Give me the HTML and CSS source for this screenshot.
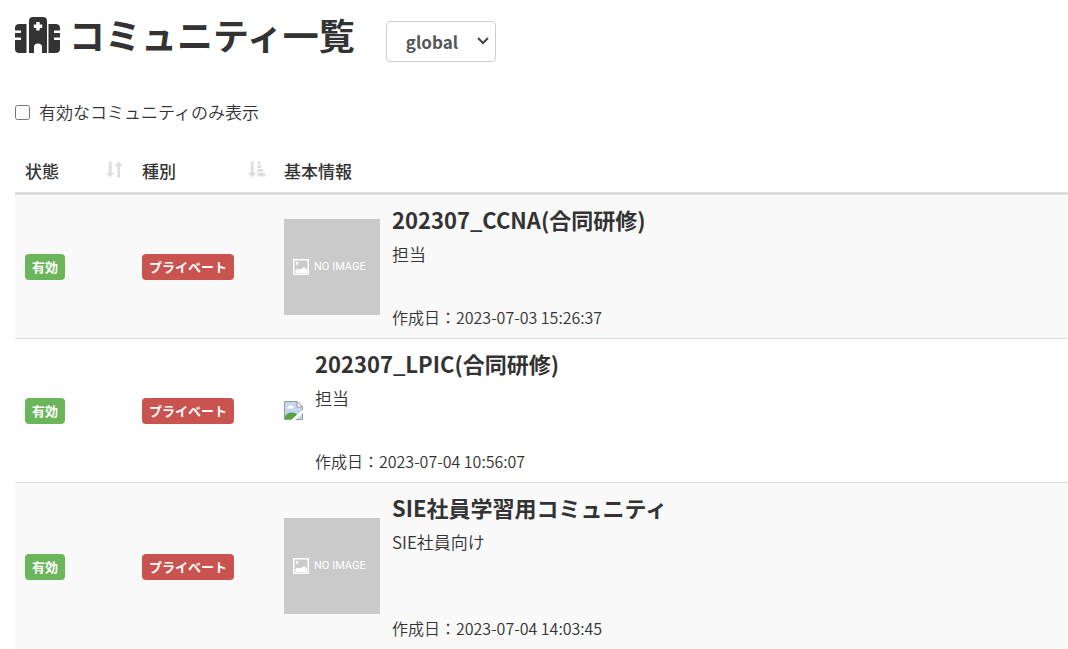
FILE: index.html
```html
<!DOCTYPE html>
<html lang="ja">
    <head>
        <meta charset="UTF-8" />
        <meta name="viewport" content="width=device-width, initial-scale=1.0" />
        <title>コミュニティ一覧</title>
        <link rel="stylesheet" href="styles.css">
    </head>

    <body>
        <!-- shared graphics -->
        <svg class="defs" aria-hidden="true">
            <symbol id="pictureIcon" viewBox="0 0 16 16">
                <path fill="#fff" fill-rule="evenodd" d="M0 0h16v16H0zM1.500 1.500v13h13v-13z" />
                <path fill="#fff" d="M2.500 14v-3l2.500-1.500 2.500 1 3.500-2.500 3 2.500v3.500z" />
                <path fill="#fff" d="M3 3h3L4.500 4.500 5 6.500 3 5.500z" />
            </symbol>
        </svg>

        <header class="page-header">
            <h1 class="page-title">
                <svg class="title-icon" viewBox="0 0 46 38" aria-hidden="true">
                    <path fill="#333" d="M4.500 8H11.500V37H4.500Q0 37 0 33V24H6V21.500H0V17H6V14.500H0V12Q0 8 4.500 8Z" />
                    <path fill="#333" d="M40.500 8H33.500V37H40.500Q45 37 45 33V24H39V21.500H45V17H39V14.500H45V12Q45 8 40.500 8Z" />
                    <path fill="#333" fill-rule="evenodd" d="M18 1H28Q32 1 32 5V37H27V31Q27 27.500 23 27.500T19 31V37H14V5Q14 1 18 1ZM21.300 6V8.500H18.800V12H21.300V14.500H24.700V12H27.200V8.500H24.700V6Z" />
                </svg>
                コミュニティ一覧
            </h1>
            <select class="scope-select" aria-label="表示範囲">
                <option>global</option>
            </select>
        </header>

        <div class="filter">
            <input type="checkbox" id="activeOnly" />
            <label for="activeOnly">有効なコミュニティのみ表示</label>
        </div>

        <table class="community-table">
            <thead>
                <tr>
                    <th class="col-status">
                        <button class="sort" type="button">
                            状態
                            <svg class="sort-icon" viewBox="0 0 18 18" aria-hidden="true">
                                <path fill="#ddd" d="M3 1h3v12h3l-4.500 5L0 13h3zM12 18V6H9l4.500-5L18 6h-3v12z" />
                            </svg>
                        </button>
                    </th>
                    <th class="col-type">
                        <button class="sort" type="button">
                            種別
                            <svg class="sort-icon" viewBox="0 0 18 18" aria-hidden="true">
                                <path fill="#ddd" d="M3 1h3v12h3l-4.500 5L0 13h3zM10 1h3v3h-3zM10 5h4v3h-4zM10 9h6v3h-6zM10 13h8v4h-8z" />
                            </svg>
                        </button>
                    </th>
                    <th>基本情報</th>
                </tr>
            </thead>
            <tbody>
                <tr>
                    <td><span class="label label-success">有効</span></td>
                    <td><span class="label label-danger">プライベート</span></td>
                    <td>
                        <div class="media">
                            <div class="no-image">
                                <svg class="picture-icon" aria-hidden="true"><use href="#pictureIcon" /></svg>
                                NO IMAGE
                            </div>
                            <div class="media-body">
                                <h2 class="name">202307_CCNA(合同研修)</h2>
                                <p class="description">担当</p>
                                <p class="created">作成日：2023-07-03 15:26:37</p>
                            </div>
                        </div>
                    </td>
                </tr>
                <tr>
                    <td><span class="label label-success">有効</span></td>
                    <td><span class="label label-danger">プライベート</span></td>
                    <td>
                        <div class="media">
                            <svg class="broken-image" viewBox="0 0 19 19" aria-hidden="true">
                                <path fill="#c4d5f2" stroke="#999" d="M.5.500H13L18.500 6V18.500H.5z" />
                                <path fill="#fff" d="M3 7.500Q3 5.500 5 5.500 6 3 8 4.500 10 5 9.500 7.500z" />
                                <path fill="#5aa33c" d="M1 18v-2.500Q3 11.500 8 11.500 12 11.500 13 14L9 18z" />
                                <path fill="#fff" stroke="#999" d="M13 .5V6h5.500z" />
                                <path fill="#fff" d="M7 19L19 8.500V12L11.500 19z" />
                            </svg>
                            <div class="media-body">
                                <h2 class="name">202307_LPIC(合同研修)</h2>
                                <p class="description">担当</p>
                                <p class="created">作成日：2023-07-04 10:56:07</p>
                            </div>
                        </div>
                    </td>
                </tr>
                <tr>
                    <td><span class="label label-success">有効</span></td>
                    <td><span class="label label-danger">プライベート</span></td>
                    <td>
                        <div class="media">
                            <div class="no-image">
                                <svg class="picture-icon" aria-hidden="true"><use href="#pictureIcon" /></svg>
                                NO IMAGE
                            </div>
                            <div class="media-body">
                                <h2 class="name">SIE社員学習用コミュニティ</h2>
                                <p class="description description-long">SIE社員向け</p>
                                <p class="created">作成日：2023-07-04 14:03:45</p>
                            </div>
                        </div>
                    </td>
                </tr>
            </tbody>
        </table>
    </body>
</html>
```
FILE: styles.css
```css
* {
    box-sizing: border-box;
}

body {
    margin: 0;
    padding: 11px 0 0 15px;
    font-family: "Noto Sans CJK JP", sans-serif;
    font-size: 17px;
    font-weight: 350;
    line-height: 24px;
    color: #333;
    background-color: #fff;
}

.defs {
    position: absolute;
    width: 0;
    height: 0;
}

.page-header {
    display: flex;
    align-items: center;
    gap: 31px;
    height: 60px;
}

.page-title {
    display: flex;
    align-items: flex-end;
    gap: 8px;
    margin: 0 0 14px;
    font-size: 36px;
    line-height: 40px;
    font-weight: 700;
}

.title-icon {
    width: 46px;
    height: 38px;
}

.scope-select {
    width: 110px;
    height: 41px;
    padding: 6px 0 6px 19px;
    border: 1px solid #ccc;
    border-radius: 4px;
    font-family: inherit;
    font-size: 17px;
    font-weight: 700;
    color: #555;
    appearance: none;
    background: #fff url("data:image/svg+xml,%3Csvg xmlns='http://www.w3.org/2000/svg' width='12' height='8'%3E%3Cpath d='M1 1l5 5 5-5' fill='none' stroke='%23444' stroke-width='2'/%3E%3C/svg%3E") no-repeat right 6px center;
}

.filter {
    display: flex;
    align-items: center;
    gap: 9px;
    margin: 29px 0 24px;
}

.filter input {
    width: 15px;
    height: 15px;
    margin: 0;
}

.community-table {
    width: 100%;
    table-layout: fixed;
    border-collapse: collapse;
}

.community-table th {
    padding: 11px 10px 9px;
    border-bottom: 3px solid #ddd;
    text-align: left;
    font-weight: 500;
}

.community-table td {
    padding: 8px 10px;
    border-bottom: 1px solid #ddd;
    vertical-align: middle;
}

.community-table tbody tr:nth-child(odd) {
    background-color: #f9f9f9;
}

.community-table .col-status,
.community-table .col-type {
    padding-right: 9px;
}

.col-status {
    width: 117px;
}

.col-type {
    width: 142px;
}

.sort {
    display: flex;
    align-items: center;
    justify-content: space-between;
    width: 100%;
    padding: 0;
    border: 0;
    font: inherit;
    color: inherit;
    background: none;
    cursor: pointer;
}

.sort-icon {
    width: 17px;
    height: 18px;
    margin-bottom: 4px;
}

.label {
    display: inline-block;
    padding: 0 7px;
    border-radius: 4px;
    font-size: 13px;
    line-height: 26px;
    font-weight: 700;
    color: #fff;
    vertical-align: middle;
}

.label-success {
    background-color: #6bb55b;
}

.label-danger {
    background-color: #c9544f;
}

.media {
    display: flex;
    align-items: center;
    gap: 12px;
}

.no-image {
    display: flex;
    align-items: center;
    gap: 5px;
    width: 96px;
    height: 96px;
    padding-left: 9px;
    font-family: Roboto, sans-serif;
    font-size: 11px;
    font-weight: 400;
    color: #fff;
    background-color: #cacaca;
}

.picture-icon {
    width: 16px;
    height: 16px;
}

.broken-image {
    width: 19px;
    height: 19px;
}

.name {
    margin: 0 0 7px;
    font-size: 22px;
    line-height: 32px;
    font-weight: 700;
}

.description {
    min-height: 63px;
    margin: 0;
}

.description-long {
    min-height: 86px;
}

.created {
    margin: 0 0 1px;
    font-size: 16px;
}
```
